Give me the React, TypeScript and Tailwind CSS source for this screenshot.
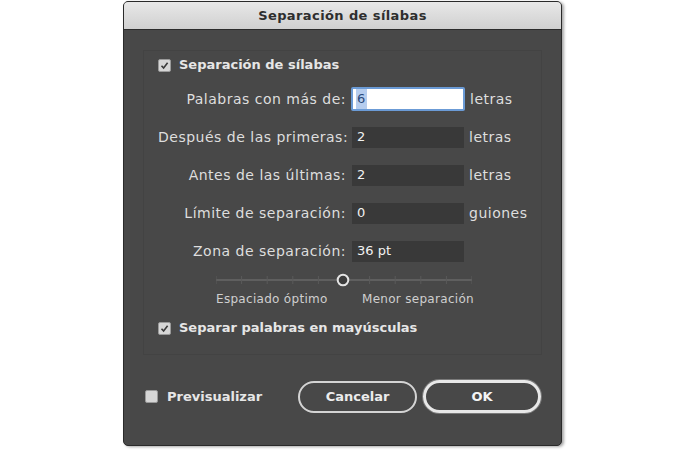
const font = { fontFamily: '"DejaVu Sans", "Liberation Sans", sans-serif' };

const Check = ({ checked }: { checked: boolean }) => (
  <span className="flex h-[13px] w-[13px] items-center justify-center rounded-[2px] border border-[#9a9a9a] bg-[#d6d6d6]">
    {checked && (
      <svg width="9" height="9" viewBox="0 0 9 9">
        <path d="M1.5 4.8 L3.6 7 L7.6 1.8" fill="none" stroke="#3a3a3a" strokeWidth="1.6" />
      </svg>
    )}
  </span>
);

type Row = { label: string; value: string; unit?: string; focus?: boolean };

const rows: Row[] = [
  { label: "Palabras con más de:", value: "6", unit: "letras", focus: true },
  { label: "Después de las primeras:", value: "2", unit: "letras" },
  { label: "Antes de las últimas:", value: "2", unit: "letras" },
  { label: "Límite de separación:", value: "0", unit: "guiones" },
  { label: "Zona de separación:", value: "36 pt" },
];

const Slider = () => {
  const ticks = [0, 1, 2, 3, 4, 5, 6, 7, 8, 9, 10];
  return (
    <svg width="256" height="14" viewBox="0 0 256 14">
      <line x1="0" y1="7" x2="256" y2="7" stroke="#5f5f5f" strokeWidth="2" />
      {ticks.map((t) => (
        <line key={t} x1={t * 25.6} y1="3" x2={t * 25.6} y2="11" stroke="#5a5a5a" strokeWidth="1" />
      ))}
      <circle cx="127" cy="7" r="5.3" fill="#3c3c3c" stroke="#e4e4e4" strokeWidth="2" />
    </svg>
  );
};

export default function App() {
  return (
    <div className="h-[450px] w-[700px] bg-white pt-px" style={font}>
      <div className="ml-[123px] flex h-[445px] w-[439px] flex-col overflow-hidden rounded-[5px] border border-[#2a2a2a] bg-[#484848] shadow-[2px_1px_3px_rgba(0,0,0,0.35)]">
        <div className="flex h-[28px] shrink-0 items-center justify-center border-b border-[#2c2c2c] bg-gradient-to-b from-[#e8e8e8] to-[#d0d0d0] text-[13px] font-bold tracking-[0.4px] text-[#2e2e2e]">
          Separación de sílabas
        </div>

        <div className="mx-[19px] mt-[20px] flex flex-col border border-[#434343] pb-[18px] pl-[14px]">
          <label className="mt-[6px] flex h-[16px] items-center gap-[8px] text-[13px] font-bold text-[#e6e6e6]">
            <Check checked />
            Separación de sílabas
          </label>

          <div className="mt-[15px] flex flex-col gap-[16px]">
            {rows.map((r) => (
              <div key={r.label} className="flex h-[22px] items-center text-[14px] tracking-[0.5px] text-[#dedede]">
                <span className="w-[188px] shrink-0 whitespace-nowrap text-right">{r.label}</span>
                {r.focus ? (
                  <span className="ml-[5px] flex h-[24px] w-[114px] items-center rounded-[2px] border-2 border-[#6b9bd6] bg-white pl-[3px] text-[13px]">
                    <span className="bg-[#b6cdee] px-px text-[#2b4a7c]">{r.value}</span>
                  </span>
                ) : (
                  <span className="ml-[6px] flex h-[21px] w-[112px] items-center bg-[#393939] pl-[5px] text-[13px] tracking-normal text-[#f2f2f2]">
                    {r.value}
                  </span>
                )}
                {r.unit && <span className="ml-[5px]">{r.unit}</span>}
              </div>
            ))}
          </div>

          <div className="ml-[58px] mt-[11px] flex w-[258px] flex-col">
            <Slider />
            <div className="mt-[3px] flex justify-between text-[12px] tracking-[0.3px] text-[#cfcfcf]">
              <span>Espaciado óptimo</span>
              <span>Menor separación</span>
            </div>
          </div>

          <label className="mt-[12px] flex h-[16px] items-center gap-[8px] text-[13px] font-bold text-[#e6e6e6]">
            <Check checked />
            Separar palabras en mayúsculas
          </label>
        </div>

        <div className="mt-[25px] flex items-center pl-[21px]">
          <label className="flex w-[153px] items-center gap-[9px] text-[13px] font-bold text-[#e6e6e6]">
            <Check checked={false} />
            Previsualizar
          </label>
          <button className="flex h-[32px] w-[119px] items-center justify-center rounded-full border-2 border-[#d4d4d4] text-[13px] font-bold text-[#ececec]">
            Cancelar
          </button>
          <button className="ml-[6px] flex h-[33px] w-[118px] items-center justify-center rounded-full border-[3px] border-[#e8e8e8] text-[13px] font-bold text-[#f4f4f4] ring-1 ring-[#7a7a7a]">
            OK
          </button>
        </div>
      </div>
    </div>
  );
}
